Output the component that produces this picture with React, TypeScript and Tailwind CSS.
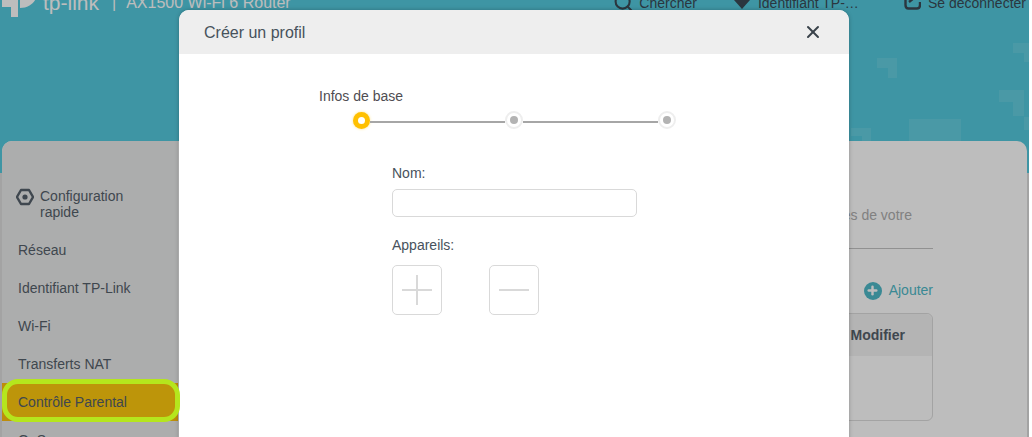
import { Plus, Search, X } from "lucide-react";

const menu = ["Réseau", "Identifiant TP-Link", "Wi-Fi", "Transferts NAT"];

function Step({ active }: { active?: boolean }) {
  if (active) {
    return (
      <span className="flex h-[17px] w-[17px] shrink-0 items-center justify-center rounded-full bg-[#ffc000] shadow-[0_0_3px_#ffe28a]">
        <span className="h-[7px] w-[7px] rounded-full bg-white" />
      </span>
    );
  }
  return (
    <span className="flex h-[18px] w-[18px] shrink-0 items-center justify-center rounded-full border-2 border-[#eeeeee] bg-white">
      <span className="h-[8px] w-[8px] rounded-full bg-[#b3b3b3]" />
    </span>
  );
}

function Decor() {
  return (
    <svg className="absolute left-0 top-0" width="1029" height="141" fill="#ffffff" fillOpacity="0.1">
      <path d="M877 58H897V78H888V68H877Z" />
      <path d="M999 90H1024V116H1013V102H999Z" />
      <path d="M1013 43H1029V62H1024V53H1013Z" />
      <path d="M1024 117H1029V130H1024Z" />
      <path d="M909 119H961V141H909Z" />
      <path d="M851 128H871V141H862V136H851Z" />
    </svg>
  );
}

export default function App() {
  return (
    <div className="relative h-[437px] w-[1029px] overflow-hidden bg-[#dcdcdc] font-['Liberation_Sans',Arial,sans-serif] text-[14px] text-[#56616b]">
      <div className="absolute inset-x-0 top-0 h-[173px] bg-[#54cade]" />
      <Decor />

      <header className="relative flex h-[141px] items-start justify-between">
        <div className="flex items-center text-white">
          <svg className="-mt-[3px] ml-[2px]" width="36" height="20" viewBox="0 0 36 20" fill="#ffffff">
            <path d="M0 -4H16V20H9V10H0Z" />
            <path d="M18 -4H35C35 4 28 11 18 11Z" />
          </svg>
          <span className="ml-[5px] -mt-[12px] text-[21px] leading-[24px]">tp-link</span>
          <span className="ml-[13px] -mt-[12px] text-[16px] leading-[24px]">|</span>
          <span className="ml-[10px] -mt-[12px] text-[16px] leading-[24px]">AX1500 Wi-Fi 6 Router</span>
        </div>
        <div className="-mt-[7px] flex items-center pr-[3px] text-[#3b4a55]">
          <Search size={21} strokeWidth={2.4} className="-mt-[2px]" />
          <span className="ml-[5px]">Chercher</span>
          <svg className="ml-[37px]" width="16" height="20" viewBox="0 0 16 20" fill="#3b4a55">
            <path d="M0 6L4 2L8 6L12 2L16 6L8 15Z" />
          </svg>
          <span className="ml-[8px] w-[100px] whitespace-nowrap">Identifiant TP-…</span>
          <svg className="ml-[46px]" width="17" height="20" viewBox="0 0 17 20" fill="none" stroke="#3b4a55" strokeWidth="2.4">
            <path d="M1.5 3V11C1.5 13 2.5 14.5 4.5 14.5H13C15 14.5 16 13 16 11V8" />
            <path d="M5 8L10 4H15" />
          </svg>
          <span className="ml-[7px]">Se déconnecter</span>
        </div>
      </header>

      <div className="relative mx-[2px] flex h-[300px] rounded-t-[10px] bg-white">
        <nav className="w-[176px] shrink-0 rounded-tl-[10px] bg-[#e9eaea] pt-[47px]">
          <div className="mb-[11px] flex pl-[14px] leading-[16px]">
            <svg className="mr-[6px] shrink-0" width="18" height="18" viewBox="0 0 18 18" fill="none" stroke="#56616b" strokeWidth="2.4">
              <path d="M5 2H13L17 9L13 16H5L1 9Z" strokeLinejoin="round" />
              <circle cx="9" cy="9" r="2.6" fill="#56616b" stroke="none" />
            </svg>
            <span>
              Configuration
              <br />
              rapide
            </span>
          </div>
          {menu.map((item) => (
            <div key={item} className="flex h-[38px] items-center pl-[16px]">
              {item}
            </div>
          ))}
          <div className="relative flex h-[38px] items-center bg-[#ffbe10] pl-[16px]">
            <span className="absolute inset-x-[3px] inset-y-0 rounded-[12px] bg-[#ffc90e]" />
            <span className="relative">Contrôle Parental</span>
          </div>
          <div className="flex h-[38px] items-center pl-[16px]">QoS</div>
        </nav>

        <main className="flex flex-1 flex-col items-end pl-[10px] pr-[94px] pt-[66px]">
          <p className="mr-[21px] whitespace-nowrap leading-[16px] text-[#aeaeae]">
            Contrôlez les activités en ligne des membres de votre
          </p>
          <div className="mt-[25px] h-px w-full bg-[#c4c4c4]" />
          <button className="mt-[31px] flex items-center text-[#4fb9c8]">
            <span className="flex h-[18px] w-[18px] items-center justify-center rounded-full bg-[#4fb9c8] text-white">
              <Plus size={13} strokeWidth={4.5} />
            </span>
            <span className="ml-[7px]">Ajouter</span>
          </button>
          <div className="mt-[12px] h-[108px] w-full rounded-[6px] border border-[#dcdcdc]">
            <div className="flex h-[42px] items-center justify-end rounded-t-[6px] bg-[#f3f3f3] pr-[27px] font-bold">
              Modifier
            </div>
          </div>
        </main>
      </div>

      {/* voile + fenetre modale */}
      <div className="absolute inset-0 flex bg-black/[0.26] pl-[179px] pt-[10px]">
        <div className="h-[600px] w-[670px] rounded-t-[10px] bg-white text-[#47525c] shadow-[0_0_4px_rgba(0,0,0,0.25)]">
          <div className="flex h-[44px] items-center justify-between rounded-t-[10px] bg-[#eeeeee] pl-[25px] pr-[26px]">
            <h2 className="pt-[1px] text-[16px]">Créer un profil</h2>
            <X size={20} strokeWidth={2.4} className="text-[#39424a]" />
          </div>

          <div className="pl-[140px] pt-[34px]">
            <p className="leading-[16px] text-[#4f4d52]">Infos de base</p>
            <div className="ml-[33.5px] mt-[7px] flex w-[323px] items-center">
              <Step active />
              <span className="mt-[3px] h-[2px] flex-1 bg-[#a6a6a6]" />
              <Step />
              <span className="mt-[3px] h-[2px] flex-1 bg-[#a6a6a6]" />
              <Step />
            </div>
          </div>

          <div className="pl-[213px] pt-[36px]">
            <label className="block leading-[16px]">Nom:</label>
            <input className="mt-[8px] block h-[28px] w-[245px] rounded-[5px] border border-[#d9d9d9] bg-white" />
            <label className="mt-[20px] block leading-[16px]">Appareils:</label>
            <div className="mt-[12px] flex gap-[47px]">
              <button className="flex h-[50px] w-[50px] items-center justify-center rounded-[5px] border border-[#d9d9d9]">
                <svg width="30" height="30" fill="#d9d9d9">
                  <path d="M14 0H16V14H30V16H16V30H14V16H0V14H14Z" />
                </svg>
              </button>
              <button className="flex h-[50px] w-[50px] items-center justify-center rounded-[5px] border border-[#d9d9d9]">
                <span className="h-[2px] w-[30px] bg-[#d9d9d9]" />
              </button>
            </div>
          </div>
        </div>
      </div>

      {/* entourage ajoute a la main sur la capture */}
      <div className="pointer-events-none absolute left-[2px] top-[379px] h-[43px] w-[178px] rounded-[16px] border-[5px] border-[#b5e61d]" />
    </div>
  );
}
